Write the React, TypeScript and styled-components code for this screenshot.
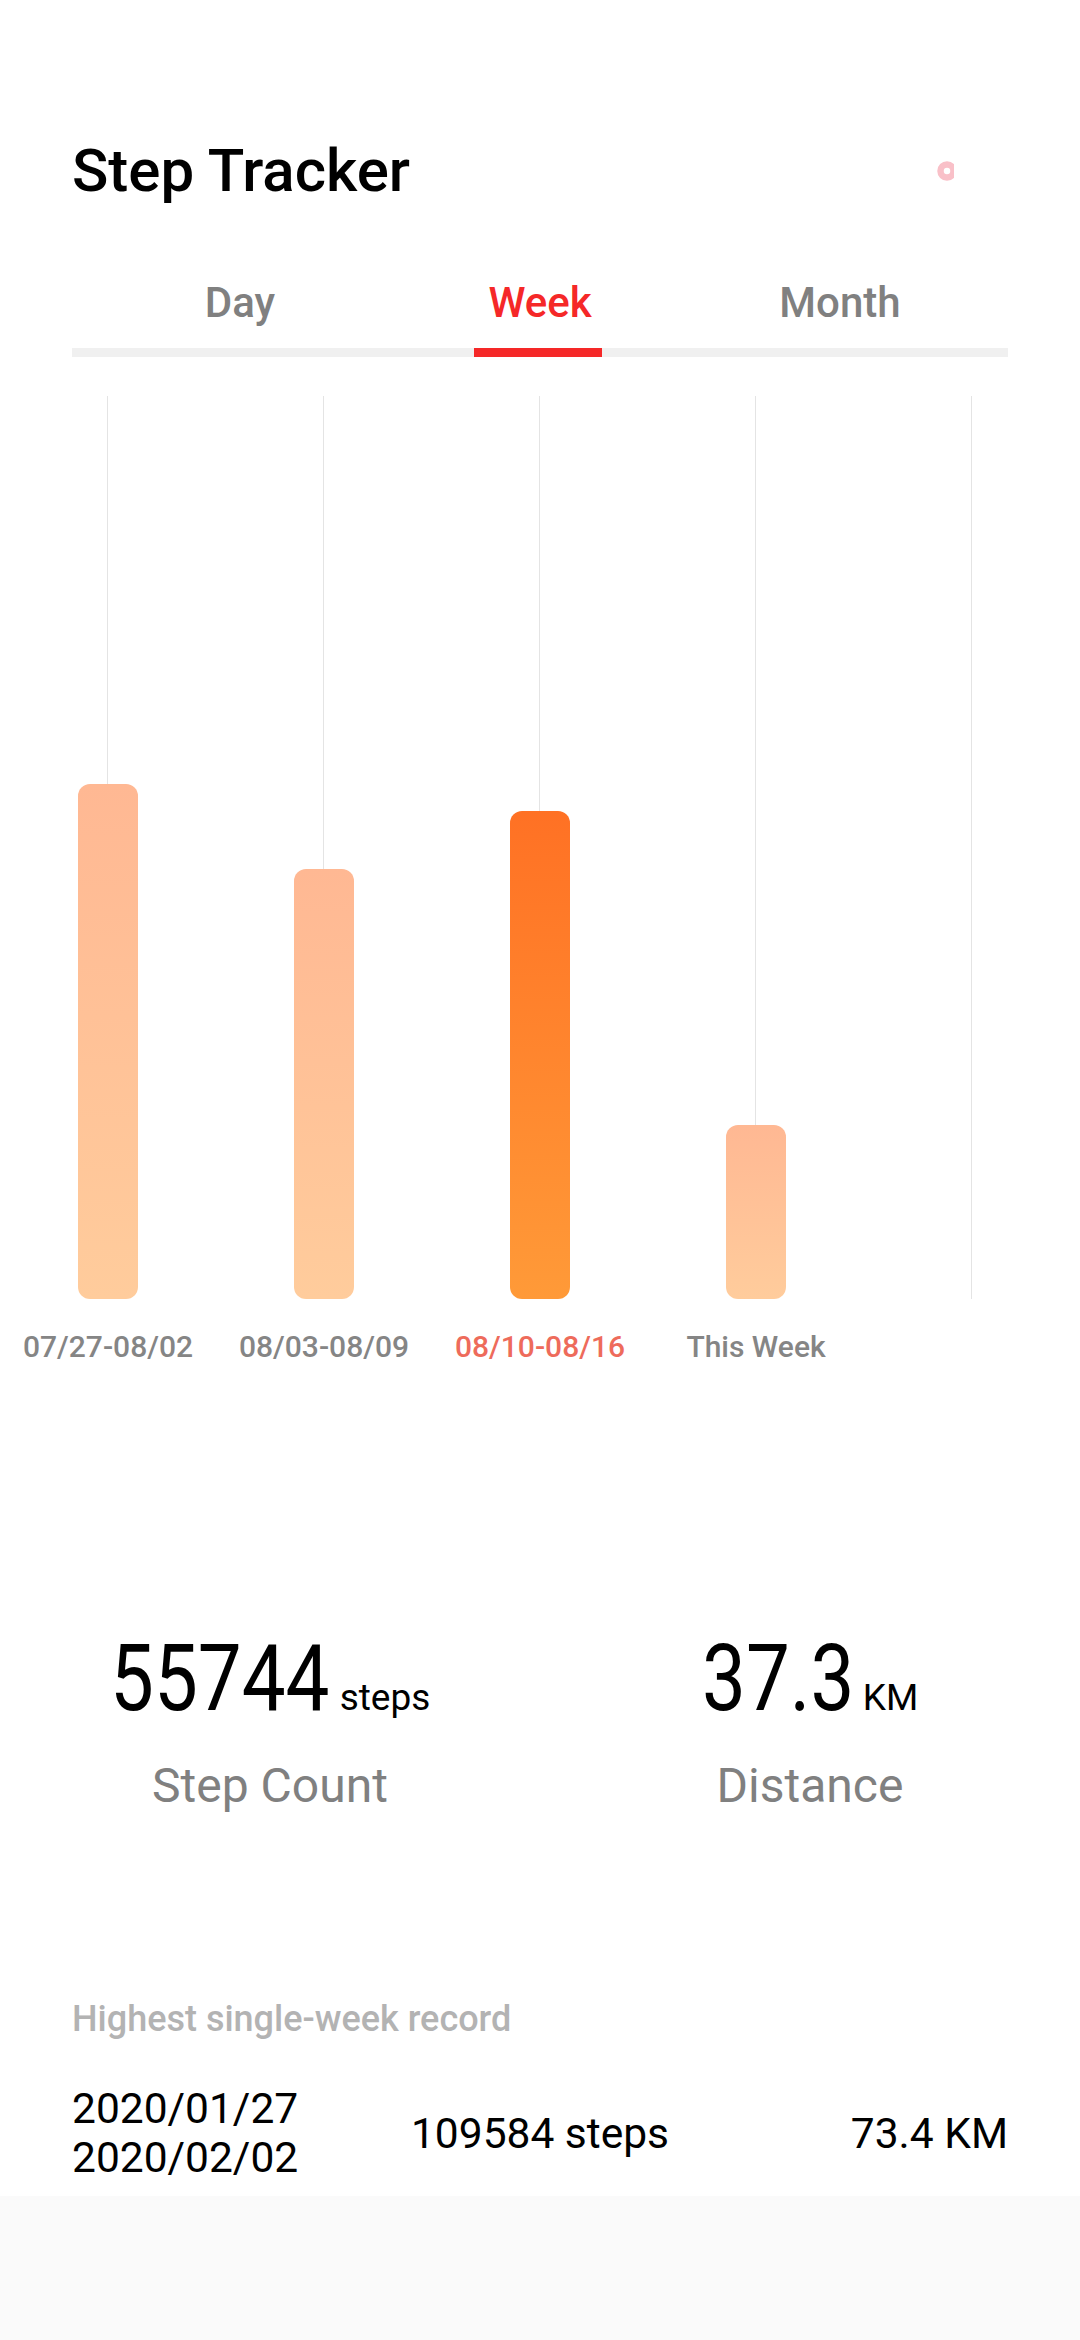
import React from 'react'
import styled, { createGlobalStyle } from 'styled-components'

const GlobalStyle = createGlobalStyle`
	html, body {
		margin: 0;
		padding: 0;
		background: #fff;
		font-family: Roboto, "Liberation Sans", sans-serif;
	}
	* { box-sizing: border-box; }
`

const Page = styled.div`
	width: 1080px;
	height: 2340px;
	display: flex;
	flex-direction: column;
	overflow: hidden;
	background: #fff;
`

const Header = styled.header`
	height: 137px;
	margin-top: 142px;
	padding: 0 72px;
	display: flex;
	align-items: flex-start;
	justify-content: space-between;
`

const Title = styled.h1`
	margin: 0;
	font-size: 60px;
	line-height: 58px;
	font-weight: 500;
	color: #000;
`

const Dot = styled.svg`
	width: 17px;
	height: 20px;
	margin: 19px 54px 0 0;
`

const Tabs = styled.nav`
	height: 69px;
	padding: 0 72px;
	display: flex;
	justify-content: center;
`

const Tab = styled.div<{ $active?: boolean }>`
	width: 300px;
	text-align: center;
	font-size: 42px;
	line-height: 48px;
	font-weight: 500;
	color: ${({ $active }) => ($active ? '#f52828' : '#808080')};
`

const Track = styled.div`
	height: 9px;
	margin: 0 72px 39px;
	background: #f0f0f0;
`

const Indicator = styled.div`
	width: 128px;
	height: 100%;
	margin-left: 402px;
	background: #f52828;
`

const Chart = styled.section`
	height: 903px;
	display: grid;
	grid-template-columns: repeat(5, 216px);
`

const Column = styled.div`
	position: relative;
	display: flex;
	align-items: flex-end;
	justify-content: center;
	&::before {
		content: '';
		position: absolute;
		top: 0;
		bottom: 0;
		left: 107px;
		width: 1px;
		background: #e4e4e4;
	}
`

const Bar = styled.div<{ $active?: boolean }>`
	position: relative;
	width: 60px;
	border-radius: 12px;
	background: ${({ $active }) =>
		$active
			? 'linear-gradient(180deg, #ff7124 0%, #ff9a38 100%)'
			: 'linear-gradient(180deg, #ffb893 0%, #ffcc9c 100%)'};
`

const Labels = styled.div`
	height: 96px;
	display: grid;
	grid-template-columns: repeat(5, 216px);
	align-items: center;
`

const Label = styled.div<{ $active?: boolean }>`
	text-align: center;
	font-size: 30px;
	line-height: 96px;
	font-weight: 500;
	white-space: nowrap;
	color: ${({ $active }) => ($active ? '#ee6b5b' : '#858585')};
`

const Stats = styled.section`
	height: 366px;
	margin-top: 238px;
	display: grid;
	grid-template-columns: 1fr 1fr;
`

const Stat = styled.div`
	display: flex;
	flex-direction: column;
	align-items: center;
`

const Value = styled.div`
	display: flex;
	align-items: baseline;
	gap: 6px;
	height: 92px;
	line-height: 92px;
`

// no DIN style face is installed, so Roboto is narrowed to the same digit width
const Figure = styled.span<{ $width: number }>`
	display: inline-block;
	width: ${({ $width }) => $width}px;
	font-size: 93px;
	color: #000;
	white-space: nowrap;
	transform: scaleX(0.84);
	transform-origin: left center;
`

const Unit = styled.span`
	font-size: 37px;
	color: #000;
`

const StatLabel = styled.div`
	margin-top: 34px;
	font-size: 48px;
	line-height: 54px;
	color: #808080;
`

const Record = styled.section`
	padding: 0 72px;
	flex: 1;
`

const RecordTitle = styled.div`
	font-size: 36px;
	line-height: 40px;
	font-weight: 500;
	color: #b3b3b3;
`

const RecordRow = styled.div`
	height: 98px;
	margin-top: 45px;
	display: grid;
	grid-template-columns: 1fr auto 1fr;
	align-items: center;
	font-size: 42.5px;
	line-height: 49px;
	color: #000;
`

const RecordEnd = styled.div`
	text-align: right;
`

const Footer = styled.footer`
	height: 144px;
	background: #fafafa;
`

const weeks = [
	{ label: '07/27-08/02', height: 515 },
	{ label: '08/03-08/09', height: 430 },
	{ label: '08/10-08/16', height: 488, active: true },
	{ label: 'This Week', height: 174 },
	{ label: '', height: 0 },
]

export default function App() {
	return (
		<Page>
			<GlobalStyle />
			<Header>
				<Title>Step Tracker</Title>
				<Dot viewBox="0 0 17 20">
					<circle cx="10" cy="10" r="6.5" fill="none" stroke="#f9c0c8" strokeWidth="6.5" />
				</Dot>
			</Header>
			<Tabs>
				<Tab>Day</Tab>
				<Tab $active>Week</Tab>
				<Tab>Month</Tab>
			</Tabs>
			<Track>
				<Indicator />
			</Track>
			<Chart>
				{weeks.map((week, index) => (
					<Column key={index}>
						{week.height > 0 && <Bar $active={week.active} style={{ height: week.height }} />}
					</Column>
				))}
			</Chart>
			<Labels>
				{weeks.map((week, index) => (
					<Label key={index} $active={week.active}>{week.label}</Label>
				))}
			</Labels>
			<Stats>
				<Stat>
					<Value>
						<Figure $width={224}>55744</Figure>
						<Unit>steps</Unit>
					</Value>
					<StatLabel>Step Count</StatLabel>
				</Stat>
				<Stat>
					<Value>
						<Figure $width={155}>37.3</Figure>
						<Unit>KM</Unit>
					</Value>
					<StatLabel>Distance</StatLabel>
				</Stat>
			</Stats>
			<Record>
				<RecordTitle>Highest single-week record</RecordTitle>
				<RecordRow>
					<div>2020/01/27<br />2020/02/02</div>
					<div>109584 steps</div>
					<RecordEnd>73.4 KM</RecordEnd>
				</RecordRow>
			</Record>
			<Footer />
		</Page>
	)
}
